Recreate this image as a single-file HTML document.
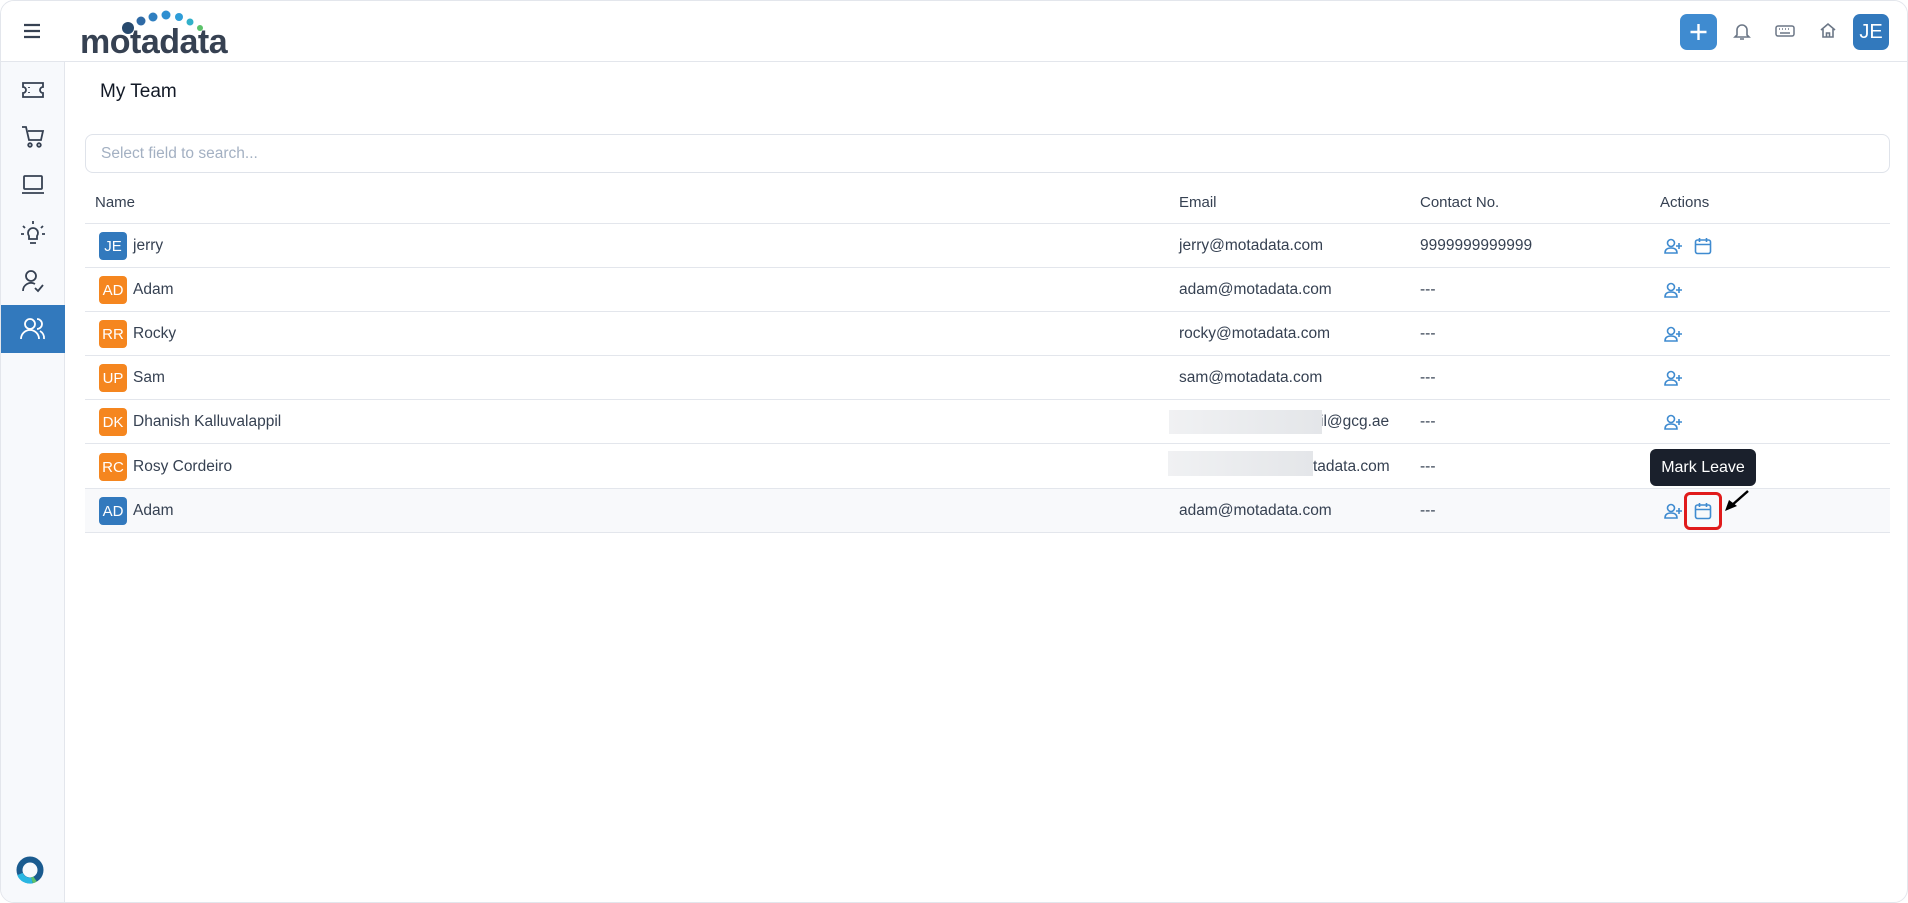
<!DOCTYPE html>
<html><head><meta charset="utf-8"><style>
*{box-sizing:border-box;margin:0;padding:0}
body{width:1908px;height:903px;background:#fff;font-family:"Liberation Sans",sans-serif;color:#364152;overflow:hidden;position:relative}
.frame{position:absolute;left:0;top:0;width:1908px;height:903px;border:1px solid #e3e6ec;border-radius:14px;overflow:hidden;background:#fff}
.hdr{position:absolute;left:0;top:0;width:1908px;height:61px;border-bottom:1px solid #e3e6ec;background:#fff}
.side{position:absolute;left:0;top:61px;width:64px;height:842px;background:#f7f9fc;border-right:1px solid #e3e6ec}
.si{position:absolute;left:0;width:64px;height:48px;display:flex;align-items:center;justify-content:center}
.si.act{background:#3279bd}
.abs{position:absolute}
.row{position:absolute;left:84px;width:1805px;height:44px;border-bottom:1px solid #e3e6ec;font-size:15.5px;color:#364152}
.row span{position:absolute;top:13px}
.av{position:absolute;left:14px;top:8px;width:28px;height:28px;border-radius:4px;color:#fff;font-size:15px;display:flex;align-items:center;justify-content:center}
.b{background:#3279bd}.o{background:#f5861f}
.th{position:absolute;top:193px;font-size:15px;color:#364152}
</style></head><body><div class="frame">
<div class="hdr">
 <svg class="abs" style="left:22px;top:22px" width="18" height="16"><path d="M1 2h16M1 8h16M1 14h16" stroke="#364152" stroke-width="2.2"/></svg>
 <div class="abs" style="left:79px;top:26px;font-size:34px;font-weight:bold;color:#364152;letter-spacing:-0.5px;line-height:30px">motadata</div>
 <svg class="abs" style="left:118px;top:9px" width="110" height="26">
  <circle cx="9" cy="18" r="6" fill="#27496d"/><circle cx="22" cy="11" r="4.5" fill="#2f6aa5"/><circle cx="34" cy="7" r="4.5" fill="#2f7fc0"/><circle cx="47" cy="5" r="4.5" fill="#2f8fd1"/><circle cx="60" cy="7" r="4" fill="#2e9dd8"/><circle cx="71" cy="12" r="3.5" fill="#31b0c9"/><circle cx="81" cy="18" r="3" fill="#5cc26a"/></svg>
 <div class="abs" style="left:1679px;top:13px;width:37px;height:36px;border-radius:7px;background:#3f8bd0"><svg width="37" height="36"><path d="M18.5 10v16M10.5 18h16" stroke="#fff" stroke-width="2.4"/></svg></div>
 <svg class="abs" style="left:1732px;top:20px" width="18" height="20" fill="none" stroke="#6b7686" stroke-width="1.6"><path d="M4 14V9a5 5 0 0110 0v5l2 2H2z"/><path d="M7 18h4"/></svg>
 <svg class="abs" style="left:1774px;top:24px" width="20" height="12" fill="none" stroke="#6b7686" stroke-width="1.5"><rect x="1" y="1" width="18" height="10" rx="2"/><path d="M4 4h1M7 4h1M10 4h1M13 4h1M16 4h0M5 8h10" /></svg>
 <svg class="abs" style="left:1818px;top:21px" width="18" height="17" fill="none" stroke="#6b7686" stroke-width="1.6"><path d="M2 8L9 2l7 6M4 7v8h10V7M7.5 15v-4h3v4"/></svg>
 <div class="abs" style="left:1852px;top:13px;width:36px;height:36px;border-radius:7px;background:#3279bd;color:#fff;font-size:20px;display:flex;align-items:center;justify-content:center">JE</div>
</div>
<div class="side">
 <div class="si" style="top:4px"><svg width="24" height="18" fill="none" stroke="#364152" stroke-width="1.8"><path d="M2 2h20v4a3 3 0 000 6v4H2v-4a3 3 0 000-6z"/><path d="M8 6v1M8 11v1"/></svg></div>
 <div class="si" style="top:51px"><svg width="24" height="24" fill="none" stroke="#364152" stroke-width="1.8"><path d="M1 2h4l3 13h12l2-9H7"/><circle cx="9" cy="20" r="1.8"/><circle cx="18" cy="20" r="1.8"/></svg></div>
 <div class="si" style="top:99px"><svg width="24" height="22" fill="none" stroke="#364152" stroke-width="1.8"><rect x="3" y="2" width="18" height="13" rx="1"/><path d="M1 19h22"/></svg></div>
 <div class="si" style="top:147px"><svg width="26" height="26" fill="none" stroke="#364152" stroke-width="1.8"><path d="M13 1v3M3 6l2 2M23 6l-2 2M1 14h3M22 14h3"/><path d="M9 19v-3a5 5 0 118 0v3zM10 23h6"/></svg></div>
 <div class="si" style="top:195px"><svg width="24" height="24" fill="none" stroke="#364152" stroke-width="1.8"><circle cx="10" cy="7" r="5"/><path d="M2 22a8 8 0 0112-7M14 19l3 3 5-6"/></svg></div>
 <div class="si act" style="top:243px"><svg width="26" height="24" fill="none" stroke="#fff" stroke-width="1.8"><circle cx="10" cy="7" r="5"/><path d="M1 22a9 9 0 0118 0M17 2a5 5 0 010 10M20 14a8 8 0 014 8"/></svg></div>
 <svg class="abs" style="left:14px;top:793px" width="30" height="30"><circle cx="15" cy="15" r="10.5" fill="none" stroke="#1a5b8f" stroke-width="6"/><path d="M5 19a10.5 10.5 0 0012 6.4" fill="none" stroke="#29b6e2" stroke-width="6"/><path d="M17 25.4a10.5 10.5 0 003-1.5" fill="none" stroke="#5cc26a" stroke-width="6"/></svg>
</div>
<div class="abs" style="left:99px;top:80px;font-size:19px;color:#121926">My Team</div>
<div class="abs" style="left:84px;top:133px;width:1805px;height:39px;border:1px solid #dfe3ea;border-radius:8px;font-size:15.5px;color:#a3b0c2;padding:10px 0 0 15px">Select field to search...</div>
<div class="th" style="left:94px">Name</div><div class="th" style="left:1178px">Email</div><div class="th" style="left:1419px">Contact No.</div><div class="th" style="left:1659px">Actions</div>
<div class="abs" style="left:84px;top:222px;width:1805px;border-top:1px solid #e3e6ec"></div>

<div class="row" style="top:223px"><div class="av b">JE</div><span style="left:48px">jerry</span><span style="left:1094px">jerry@motadata.com</span><span style="left:1335px">9999999999999</span>
<svg class="abs" style="left:1579px;top:14px" width="20" height="17" fill="none" stroke="#3f8bd0" stroke-width="1.6"><circle cx="7" cy="5" r="3.5"/><path d="M1 15q0-5 6-5t6 5zM15 5v6M12 8h6"/></svg>
<svg class="abs" style="left:1609px;top:13px" width="18" height="18" fill="none" stroke="#3f8bd0" stroke-width="1.6"><rect x="1.5" y="3" width="15" height="13.5" rx="2"/><path d="M1.5 7.5h15M5.5 1v4M12.5 1v4"/></svg></div>
<div class="row" style="top:267px"><div class="av o">AD</div><span style="left:48px">Adam</span><span style="left:1094px">adam@motadata.com</span><span style="left:1335px">---</span>
<svg class="abs" style="left:1579px;top:14px" width="20" height="17" fill="none" stroke="#3f8bd0" stroke-width="1.6"><circle cx="7" cy="5" r="3.5"/><path d="M1 15q0-5 6-5t6 5zM15 5v6M12 8h6"/></svg></div>
<div class="row" style="top:311px"><div class="av o">RR</div><span style="left:48px">Rocky</span><span style="left:1094px">rocky@motadata.com</span><span style="left:1335px">---</span>
<svg class="abs" style="left:1579px;top:14px" width="20" height="17" fill="none" stroke="#3f8bd0" stroke-width="1.6"><circle cx="7" cy="5" r="3.5"/><path d="M1 15q0-5 6-5t6 5zM15 5v6M12 8h6"/></svg></div>
<div class="row" style="top:355px"><div class="av o">UP</div><span style="left:48px">Sam</span><span style="left:1094px">sam@motadata.com</span><span style="left:1335px">---</span>
<svg class="abs" style="left:1579px;top:14px" width="20" height="17" fill="none" stroke="#3f8bd0" stroke-width="1.6"><circle cx="7" cy="5" r="3.5"/><path d="M1 15q0-5 6-5t6 5zM15 5v6M12 8h6"/></svg></div>
<div class="row" style="top:399px"><div class="av o">DK</div><span style="left:48px">Dhanish Kalluvalappil</span><span style="left:1235px">il@gcg.ae</span><span style="left:1335px">---</span>
<div class="abs" style="left:1084px;top:10px;width:153px;height:24px;background:linear-gradient(90deg,#f0f1f3,#e4e6e9)"></div>
<svg class="abs" style="left:1579px;top:14px" width="20" height="17" fill="none" stroke="#3f8bd0" stroke-width="1.6"><circle cx="7" cy="5" r="3.5"/><path d="M1 15q0-5 6-5t6 5zM15 5v6M12 8h6"/></svg></div>
<div class="row" style="top:444px"><div class="av o">RC</div><span style="left:48px">Rosy Cordeiro</span><span style="left:1228px">tadata.com</span><span style="left:1335px">---</span>
<div class="abs" style="left:1083px;top:6px;width:145px;height:25px;background:linear-gradient(90deg,#f0f1f3,#e4e6e9)"></div></div>
<div class="row" style="top:488px;background:#f8f9fb"><div class="av b">AD</div><span style="left:48px">Adam</span><span style="left:1094px">adam@motadata.com</span><span style="left:1335px">---</span>
<svg class="abs" style="left:1579px;top:14px" width="20" height="17" fill="none" stroke="#3f8bd0" stroke-width="1.6"><circle cx="7" cy="5" r="3.5"/><path d="M1 15q0-5 6-5t6 5zM15 5v6M12 8h6"/></svg>
<svg class="abs" style="left:1609px;top:13px" width="18" height="18" fill="none" stroke="#3f8bd0" stroke-width="1.6"><rect x="1.5" y="3" width="15" height="13.5" rx="2"/><path d="M1.5 7.5h15M5.5 1v4M12.5 1v4"/></svg>
<div class="abs" style="left:1599px;top:3px;width:38px;height:38px;border:3px solid #e01b1b;border-radius:6px"></div></div>
<div class="abs" style="left:1649px;top:448px;width:106px;height:37px;background:#1a202c;border-radius:6px;color:#fff;font-size:16px;display:flex;align-items:center;justify-content:center">Mark Leave</div>
<svg class="abs" style="left:1720px;top:488px" width="30" height="26"><path d="M27 2L10 17" stroke="#000" stroke-width="2.5"/><path d="M4 22l4-11 8 6z" fill="#000"/></svg>
</div></body></html>
